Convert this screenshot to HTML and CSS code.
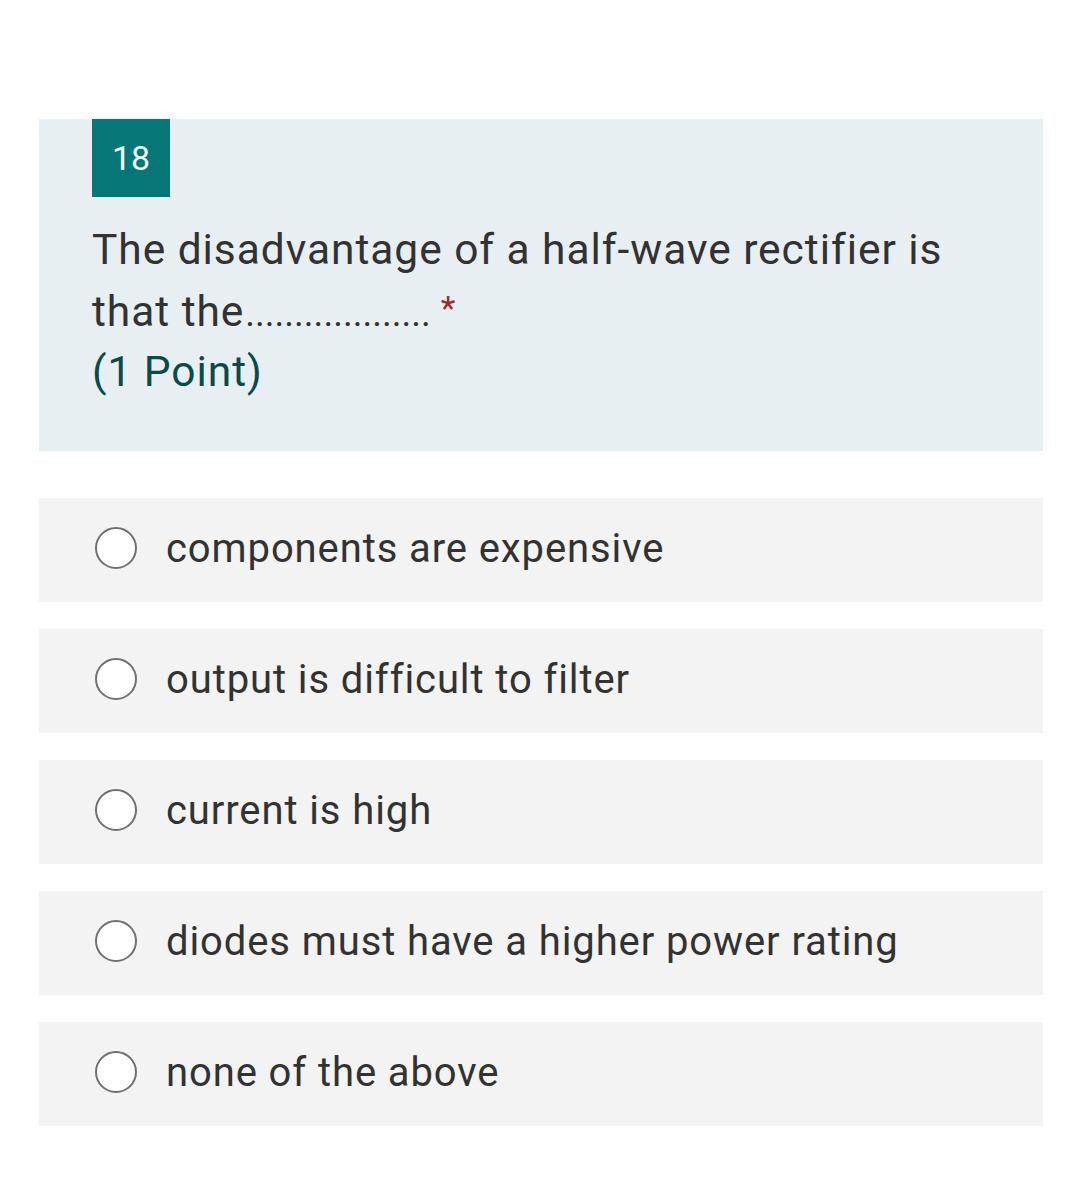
FILE: index.html
```html
<!DOCTYPE html>
<html>
<head>
<meta charset="utf-8">
<link rel="stylesheet" href="styles.css">
</head>
<body>
<div class="page">
  <section class="question">
    <div class="badge">18</div>
    <div class="qtext">The disadvantage of a half-wave rectifier is that the<span class="dots">...................</span><span class="req">*</span></div>
    <div class="points">(1 Point)</div>
  </section>
  <div class="options">
    <label class="option"><span class="radio"></span><span class="label">components are expensive</span></label>
    <label class="option"><span class="radio"></span><span class="label">output is difficult to filter</span></label>
    <label class="option"><span class="radio"></span><span class="label">current is high</span></label>
    <label class="option"><span class="radio"></span><span class="label">diodes must have a higher power rating</span></label>
    <label class="option"><span class="radio"></span><span class="label">none of the above</span></label>
  </div>
</div>
</body>
</html>
```
FILE: styles.css
```css
html, body {
  margin: 0;
  padding: 0;
  background: #ffffff;
}
body {
  font-family: Roboto, "Liberation Sans", sans-serif;
  color: #333333;
}
.page {
  padding: 119px 37px 0 39px;
}
.question {
  background: #e8eff2;
  padding: 0 40px 50px 53px;
}
.badge {
  width: 78px;
  height: 78px;
  background: #077676;
  color: #eaf6f6;
  font-size: 34px;
  display: flex;
  align-items: center;
  justify-content: center;
}
.qtext {
  margin-top: 24px;
  font-size: 42.5px;
  letter-spacing: 0.95px;
  line-height: 58px;
  color: #323232;
  width: 900px;
}
.dots {
  font-size: 37px;
  letter-spacing: 0;
  margin-left: 1px;
}
.req {
  color: #a4262c;
  font-size: 34px;
  letter-spacing: 0;
  margin-left: 10px;
  vertical-align: 6px;
}
.points {
  font-size: 42.5px;
  letter-spacing: 0.95px;
  line-height: 58px;
  color: #0b4a48;
}
.options {
  margin-top: 47px;
  display: flex;
  flex-direction: column;
  gap: 27px;
}
.option {
  background: #f3f3f3;
  height: 104px;
  box-sizing: border-box;
  padding-bottom: 4px;
  display: flex;
  align-items: center;
  padding-left: 95px;
  position: relative;
}
.radio {
  position: absolute;
  left: 56px;
  top: 50%;
  width: 38px;
  height: 38px;
  margin-top: -23px;
  border: 2.5px solid #707070;
  border-radius: 50%;
  background: #ffffff;
}
.label {
  margin-left: 32px;
  font-size: 40px;
  letter-spacing: 0.9px;
  color: #323232;
}
```
